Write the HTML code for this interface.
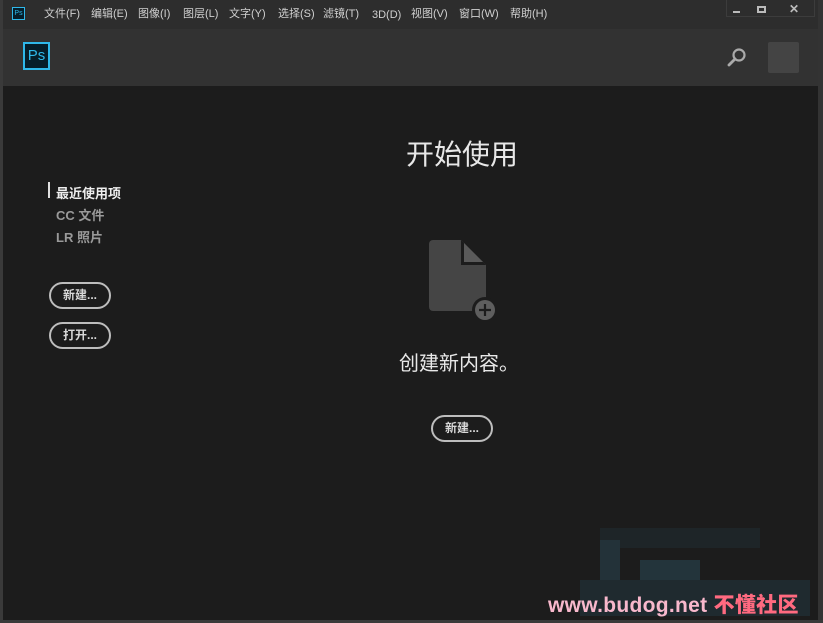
<!DOCTYPE html>
<html><head><meta charset="utf-8"><style>
*{margin:0;padding:0;box-sizing:border-box}
body{width:823px;height:623px;background:#1c1c1c;font-family:"Liberation Sans","Noto Sans CJK SC",sans-serif;position:relative;overflow:hidden}
.tb{position:absolute;left:0;top:0;width:823px;height:29px;background:#2d2d2d}
.menu{position:absolute;top:7px;font-size:11px;line-height:14px;color:#d0d0d0;white-space:nowrap}
.hd{position:absolute;left:3px;top:29px;width:815px;height:57px;background:#323232}
.lb{position:absolute;left:0;top:0;width:3px;height:623px;background:#3a3a3a}
.rb{position:absolute;right:0;top:0;width:5px;height:623px;background:#333}
.bb{position:absolute;left:0;bottom:0;width:823px;height:3px;background:#3a3a3a}
.btn{position:absolute;border:2px solid #bdbdbd;border-radius:14px;color:#d8d8d8;font-size:12px;font-weight:bold;text-align:center;line-height:22px}
.side{position:absolute;left:56px;font-size:13px;font-weight:bold}
</style></head><body>
<div class="tb"></div>
<div style="position:absolute;left:12px;top:7px;width:13px;height:13px;border:1px solid #2fb8ea;background:#061e2a;color:#2fb8ea;font-size:7px;line-height:11px;text-align:center">Ps</div>
<div class="menu" style="left:44px">文件(F)</div>
<div class="menu" style="left:91px">编辑(E)</div>
<div class="menu" style="left:138px">图像(I)</div>
<div class="menu" style="left:183px">图层(L)</div>
<div class="menu" style="left:229px">文字(Y)</div>
<div class="menu" style="left:278px">选择(S)</div>
<div class="menu" style="left:323px">滤镜(T)</div>
<div class="menu" style="left:372px;top:8px">3D(D)</div>
<div class="menu" style="left:411px">视图(V)</div>
<div class="menu" style="left:459px">窗口(W)</div>
<div class="menu" style="left:510px">帮助(H)</div>
<div style="position:absolute;left:726px;top:0;width:89px;height:17px;border:1px solid #3c3c3c;border-top:none"></div>
<div style="position:absolute;left:733px;top:11px;width:7px;height:2px;background:#bbb"></div>
<div style="position:absolute;left:757px;top:6px;width:9px;height:7px;border:2px solid #bbb"></div>
<div style="position:absolute;left:789px;top:2px;color:#bbb;font-size:12px;font-weight:bold">✕</div>
<div class="hd"></div>
<div style="position:absolute;left:23px;top:42px;width:27px;height:28px;border:2px solid #2fb8ea;background:#061e2a;color:#2fb8ea;font-size:15px;line-height:24px;text-align:center">Ps</div>
<svg style="position:absolute;left:726px;top:46px" width="22" height="22" viewBox="0 0 22 22"><circle cx="13" cy="9" r="5.5" fill="none" stroke="#aaa" stroke-width="2.2"/><line x1="9" y1="13" x2="3" y2="19" stroke="#aaa" stroke-width="2.8" stroke-linecap="round"/></svg>
<div style="position:absolute;left:768px;top:42px;width:31px;height:31px;background:#444;border-radius:2px"></div>
<div style="position:absolute;left:406px;top:133px;font-size:28px;color:#e8e8e8">开始使用</div>
<div style="position:absolute;left:48px;top:182px;width:2px;height:16px;background:#e0e0e0"></div>
<div class="side" style="top:183px;color:#eee">最近使用项</div>
<div class="side" style="top:205px;color:#999">CC 文件</div>
<div class="side" style="top:227px;color:#999">LR 照片</div>
<div class="btn" style="left:49px;top:282px;width:62px;height:27px">新建...</div>
<div class="btn" style="left:49px;top:322px;width:62px;height:27px">打开...</div>
<svg style="position:absolute;left:428px;top:239px" width="72" height="86" viewBox="0 0 72 86"><path d="M5 1 H33 L58 26 V68 A4 4 0 0 1 54 72 H5 A4 4 0 0 1 1 68 V5 A4 4 0 0 1 5 1Z" fill="#454545"/><path d="M33 1 V26 H58" fill="#1c1c1c"/><path d="M36 4 L55 23 H36Z" fill="#5a5a5a"/><circle cx="57" cy="71" r="13" fill="#1c1c1c"/><circle cx="57" cy="71" r="10" fill="#5e5e5e"/><path d="M57 65 V77 M51 71 H63" stroke="#1c1c1c" stroke-width="2.2"/></svg>
<div style="position:absolute;left:399px;top:347px;font-size:20px;color:#e8e8e8">创建新内容。</div>
<div class="btn" style="left:431px;top:415px;width:62px;height:27px">新建...</div>
<div style="position:absolute;left:600px;top:528px;width:160px;height:20px;background:#1e2528"></div>
<div style="position:absolute;left:600px;top:540px;width:20px;height:40px;background:#233239"></div>
<div style="position:absolute;left:640px;top:560px;width:60px;height:20px;background:#23343b"></div>
<div style="position:absolute;left:580px;top:580px;width:230px;height:36px;background:#1f2a2f"></div>
<div style="position:absolute;left:548px;top:589px;font-size:21px;font-weight:bold;color:#f8b8cc;white-space:nowrap;letter-spacing:0.3px">www.budog.net <span style="color:#ff6a80;font-family:'Noto Sans CJK SC',sans-serif;font-weight:900">不懂社区</span></div>
<div class="lb"></div><div class="rb"></div><div class="bb"></div>
</body></html>
